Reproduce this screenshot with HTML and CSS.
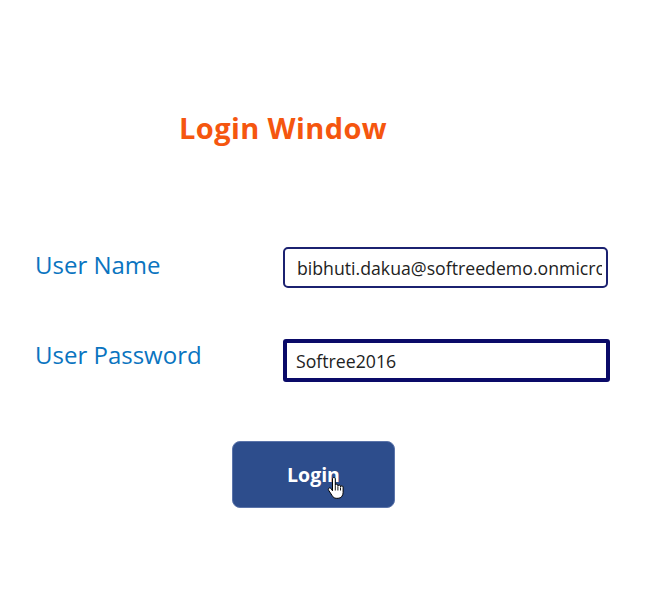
FILE: index.html
```
<!DOCTYPE html>
<html lang="en">
<head>
<meta charset="utf-8">
<title>Login Window</title>
<link rel="stylesheet" href="styles.css">
</head>
<body>
<main class="page">
  <h1 class="title">Login Window</h1>
  <form class="form">
    <div class="row">
      <label class="label" for="user">User Name</label>
      <input class="field field-name" id="user" type="text" value="bibhuti.dakua@softreedemo.onmicrosoft.com">
    </div>
    <div class="row row-pass">
      <label class="label" for="pass">User Password</label>
      <input class="field field-pass" id="pass" type="text" value="Softree2016">
    </div>
    <div class="actions">
      <button class="btn" type="button">Login
        <svg class="cursor" width="18" height="23" viewBox="0 0 18 23" aria-hidden="true">
          <path d="M5.5 2c0-.9.6-1.5 1.4-1.5S8.3 1.1 8.3 2v6.5c0-.8.6-1.3 1.3-1.3s1.3.5 1.3 1.3v.8c0-.8.6-1.3 1.3-1.3s1.3.5 1.3 1.3v.8c0-.8.6-1.3 1.3-1.3s1.3.5 1.3 1.3v5.4c0 3.2-2 5.8-5 5.8H9.3c-2 0-3.1-1-4.1-2.6L1.6 13.2c-.5-.8-.3-1.7.4-2.1.7-.4 1.6-.2 2.1.6l1.4 2.1Z" fill="#fff" stroke="#000" stroke-width="1" stroke-linejoin="round"/>
          <path d="M8.3 9v4.5M10.9 9.8v3.7M13.5 10.6v2.9" stroke="#000" stroke-width="0.9" fill="none"/>
        </svg>
      </button>
    </div>
  </form>
</main>
</body>
</html>
```
FILE: styles.css
```
html, body {
  margin: 0;
  padding: 0;
  background: #ffffff;
}

body {
  font-family: "Open Sans", "Noto Sans", sans-serif;
  width: 650px;
  height: 605px;
  overflow: hidden;
}

.page {
  padding-left: 35px;
  padding-top: 108px;
}

.title {
  margin: 0 0 0 144px;
  font-size: 29px;
  line-height: 40px;
  font-weight: 700;
  letter-spacing: 0.4px;
  color: #f5560f;
}

.form {
  margin: 99px 0 0 0;
}

.row {
  display: flex;
  align-items: flex-start;
}

.row-pass {
  margin-top: 51px;
}

.label {
  flex: 0 0 248px;
  margin-top: 2px;
  font-size: 24px;
  line-height: 32px;
  color: #0a74c0;
}

.row-pass .label {
  margin-top: 0;
}

.field {
  box-sizing: border-box;
  margin: 0;
  font-family: "Open Sans", "Noto Sans", sans-serif;
  font-size: 17.7px;
  color: #222222;
  background: #ffffff;
  outline: none;
}

.field-name {
  width: 325px;
  height: 41px;
  border: 2px solid #1b2170;
  border-radius: 5px;
  padding: 0 4px 0 12px;
}

.field-pass {
  width: 327px;
  height: 43px;
  border: 4px solid #0a0a68;
  border-radius: 3px;
  padding: 0 8px 0 9px;
}

.actions {
  margin-top: 59px;
  padding-left: 197px;
}

.btn {
  position: relative;
  box-sizing: border-box;
  width: 163px;
  height: 67px;
  border: 1px solid #5b74aa;
  border-radius: 8px;
  background: #2d4d8c;
  color: #ffffff;
  font-family: "Open Sans", "Noto Sans", sans-serif;
  font-weight: 700;
  font-size: 19.5px;
  padding: 0;
  cursor: pointer;
}

.cursor {
  position: absolute;
  left: 94px;
  top: 35px;
}
```
